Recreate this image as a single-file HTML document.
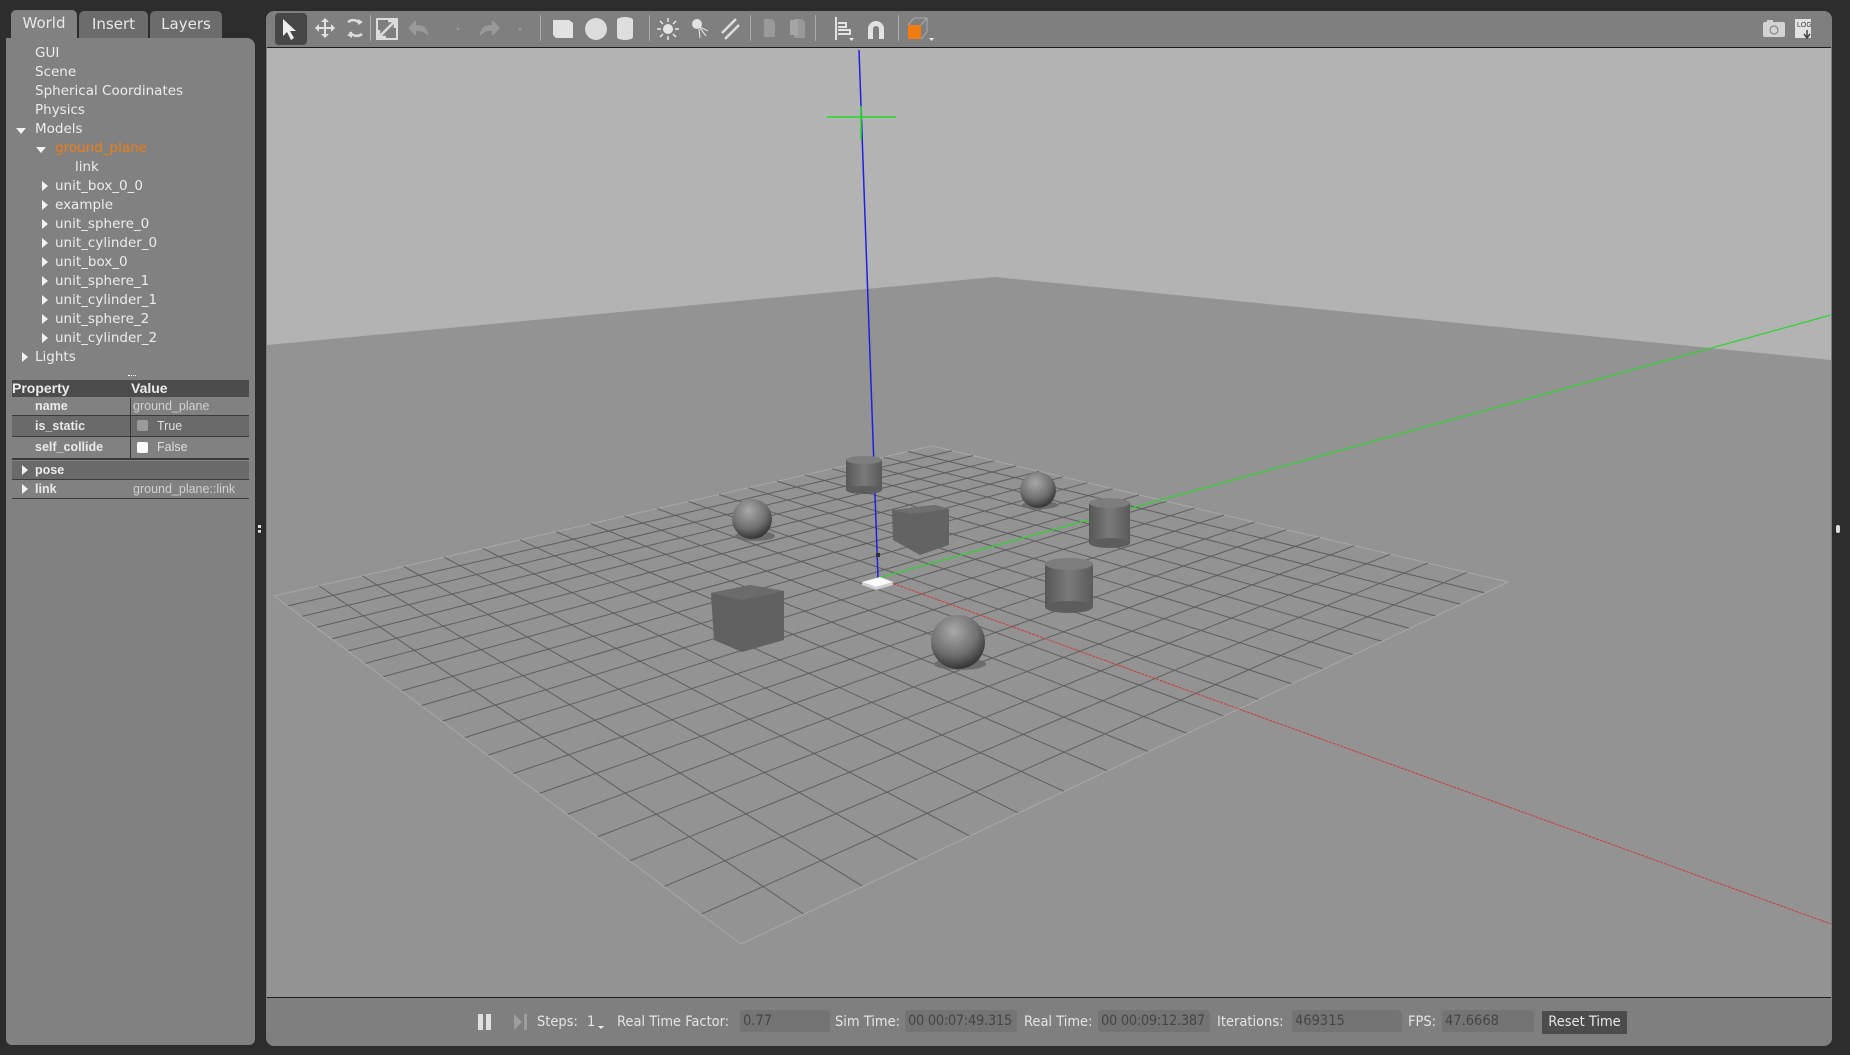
<!DOCTYPE html>
<html><head><meta charset="utf-8"><style>
html,body{margin:0;padding:0;width:1850px;height:1055px;overflow:hidden;background:#2d2d2d;font-family:"Liberation Sans","DejaVu Sans",sans-serif;}
.abs{position:absolute}
#panel{left:6px;top:38px;width:249px;height:1007px;background:#818181;border-radius:0 8px 6px 6px;}
.tab{top:11px;height:27px;border-radius:5px 5px 0 0;font-size:15px;color:#e8e8e8;text-align:center;line-height:26px;font-family:"DejaVu Sans",sans-serif;}
.tree{position:absolute;font-family:"DejaVu Sans",sans-serif;font-size:13.5px;color:#ececec;line-height:19px;}
.tri{position:absolute;width:0;height:0}
.tr{border-top:5px solid transparent;border-bottom:5px solid transparent;border-left:6px solid #f2f2f2}
.td{border-left:5px solid transparent;border-right:5px solid transparent;border-top:6px solid #f2f2f2}
.row{position:absolute;left:12px;width:237px;font-size:12.5px;font-weight:bold;color:#eaeaea;}
.bb{font-family:"DejaVu Sans Condensed","DejaVu Sans",sans-serif;font-size:14.5px;color:#e4e4e4;position:absolute;top:1014px}
.fld{position:absolute;top:1010px;height:22px;background:#747474;border-radius:3px;font-size:14.5px;color:#454545;line-height:22px;padding-left:3px;box-sizing:border-box;font-family:"DejaVu Sans Condensed","DejaVu Sans",sans-serif}
</style></head><body>
<div class="abs tab" style="left:11px;width:66px;background:#818181;top:10px;height:29px">World</div>
<div class="abs tab" style="left:79px;width:69px;background:#6c6c6c;">Insert</div>
<div class="abs tab" style="left:150px;width:72px;background:#6c6c6c;">Layers</div>
<div class="abs" id="panel"></div>
<div class="tree" style="left:35px;top:44px">GUI<br>Scene<br>Spherical Coordinates<br>Physics<br>Models</div>
<div class="tri td" style="left:16px;top:128px"></div>
<div class="tree" style="left:55px;top:139px;color:#f07d13">ground_plane</div>
<div class="tri td" style="left:36px;top:147px"></div>
<div class="tree" style="left:75px;top:158px">link</div>
<div class="tree" style="left:55px;top:177px">unit_box_0_0<br>example<br>unit_sphere_0<br>unit_cylinder_0<br>unit_box_0<br>unit_sphere_1<br>unit_cylinder_1<br>unit_sphere_2<br>unit_cylinder_2</div>
<div class="tri tr" style="left:42px;top:181px"></div><div class="tri tr" style="left:42px;top:200px"></div>
<div class="tri tr" style="left:42px;top:219px"></div><div class="tri tr" style="left:42px;top:238px"></div>
<div class="tri tr" style="left:42px;top:257px"></div><div class="tri tr" style="left:42px;top:276px"></div>
<div class="tri tr" style="left:42px;top:295px"></div><div class="tri tr" style="left:42px;top:314px"></div>
<div class="tri tr" style="left:42px;top:333px"></div>
<div class="tree" style="left:35px;top:348px">Lights</div>
<div class="tri tr" style="left:22px;top:352px"></div>
<div class="abs" style="left:128px;top:375px;width:8px;height:2px;border-top:1px dotted #fff"></div>
<div class="row" style="top:380px;height:17px;background:#4b4b4b;font-size:14px;line-height:17px"><span style="position:absolute;left:0">Property</span><span style="position:absolute;left:119px">Value</span></div>
<div class="row" style="top:398px;height:17px;line-height:17px;border-bottom:1px solid #3a3a3a"><span style="position:absolute;left:23px">name</span><span style="position:absolute;left:121px;font-weight:normal;color:#cfcfcf">ground_plane</span><span style="position:absolute;left:118px;top:0;height:18px;border-left:1px solid #3a3a3a"></span></div>
<div class="row" style="top:416px;height:20px;line-height:20px;background:#6a6a6a;border-bottom:1px solid #3a3a3a"><span style="position:absolute;left:23px">is_static</span><span style="position:absolute;left:118px;top:0;height:21px;border-left:1px solid #3a3a3a"></span><span style="position:absolute;left:125px;top:4px;width:11px;height:11px;background:#9a9a9a;border-radius:2px"></span><span style="position:absolute;left:145px;font-weight:normal;color:#dedede">True</span></div>
<div class="row" style="top:437px;height:21px;line-height:21px;border-bottom:2px solid #3a3a3a"><span style="position:absolute;left:23px">self_collide</span><span style="position:absolute;left:118px;top:0;height:21px;border-left:1px solid #3a3a3a"></span><span style="position:absolute;left:125px;top:5px;width:11px;height:11px;background:#fff;border-radius:2px"></span><span style="position:absolute;left:145px;font-weight:normal;color:#dedede">False</span></div>
<div class="row" style="top:461px;height:18px;line-height:18px;background:#6a6a6a;border-bottom:1px solid #3a3a3a"><span style="position:absolute;left:23px">pose</span></div>
<div class="tri tr" style="left:22px;top:465px"></div>
<div class="row" style="top:481px;height:17px;line-height:17px;border-bottom:1px solid #3a3a3a"><span style="position:absolute;left:23px">link</span><span style="position:absolute;left:121px;font-weight:normal;color:#cfcfcf">ground_plane::link</span></div>
<div class="tri tr" style="left:22px;top:484px"></div>
<div class="abs" style="left:258px;top:525px;width:3px;height:8px;border-left:3px dotted #ddd"></div>
<div class="abs" style="left:1836px;top:525px;width:4px;height:8px;border-left:4px dotted #ddd"></div>

<div class="abs" style="left:266px;top:11px;width:1566px;height:1035px;background:#7f7f7f;border-radius:8px;"></div>
<div class="abs" style="left:267px;top:47px;width:1564px;height:1px;background:#1e1e1e"></div>
<div class="abs" style="left:267px;top:997px;width:1564px;height:1px;background:#1e1e1e"></div>

<svg class="abs" style="left:0;top:0" width="1850" height="1055" id="sv">
<defs><clipPath id="vc"><rect x="267" y="48" width="1564" height="949"/></clipPath>
<radialGradient id="sg" cx="0.42" cy="0.3" r="0.75"><stop offset="0" stop-color="#a8a8a8"/><stop offset="0.6" stop-color="#6e6e6e"/><stop offset="1" stop-color="#2a2a2a"/></radialGradient>
<linearGradient id="cg" x1="0" x2="1"><stop offset="0" stop-color="#575757"/><stop offset="0.5" stop-color="#7a7a7a"/><stop offset="1" stop-color="#5a5a5a"/></linearGradient>
</defs>
<g clip-path="url(#vc)">
<rect x="267" y="48" width="1564" height="949" fill="#939393"/>
<polygon points="267,48 1831,48 1831,360 995,277 267,345" fill="#b3b3b3"/>
<g id="grid" stroke="#5e5e5e" stroke-width="1" fill="none"></g>
<line x1="878" y1="578" x2="1831" y2="315" stroke="#2dd42d" stroke-width="1.2"/>
<line x1="878" y1="578" x2="1831" y2="924" stroke="#d03a3a" stroke-width="1" stroke-dasharray="3,1"/>
<line x1="859" y1="50" x2="878" y2="578" stroke="#2020e0" stroke-width="1.5"/>
<line x1="827" y1="117" x2="896" y2="117" stroke="#22dd22" stroke-width="1.5"/>
<line x1="861" y1="106" x2="861" y2="140" stroke="#22dd22" stroke-width="1.5"/>
<g>
<rect x="846" y="460" width="36" height="30" fill="url(#cg)"/><ellipse cx="864" cy="490" rx="18" ry="4" fill="#5d5d5d"/><ellipse cx="864" cy="460" rx="18" ry="4" fill="#7d7d7d"/>
<rect x="1089" y="503" width="41" height="40" fill="url(#cg)"/><ellipse cx="1109.5" cy="543" rx="20.5" ry="5" fill="#5d5d5d"/><ellipse cx="1109.5" cy="503" rx="20.5" ry="5" fill="#7d7d7d"/>
<rect x="1045" y="564" width="48" height="43" fill="url(#cg)"/><ellipse cx="1069" cy="607" rx="24" ry="6" fill="#5d5d5d"/><ellipse cx="1069" cy="564" rx="24" ry="6" fill="#7d7d7d"/>
</g>
<polygon points="892,510 935,505 949,509 949,545 920,555 893,540" fill="#636363"/>
<polygon points="892,510 935,505 949,509 912,514" fill="#6f6f6f"/>
<polygon points="711,593 750,585 784,591 784,640 742,652 714,640" fill="#616161"/>
<polygon points="711,593 750,585 784,591 742,600" fill="#6b6b6b"/>
<ellipse cx="755" cy="536" rx="20" ry="5" fill="#6c6c6c"/>
<circle cx="752" cy="519" r="20" fill="url(#sg)"/>
<ellipse cx="1040" cy="505" rx="18" ry="4" fill="#6c6c6c"/>
<circle cx="1038" cy="490" r="18" fill="url(#sg)"/>
<ellipse cx="960" cy="664" rx="26" ry="6" fill="#6c6c6c"/>
<circle cx="958" cy="642" r="27" fill="url(#sg)"/>
<polygon points="862,582 880,577 893,582 876,587" fill="#fafafa"/>
<polygon points="862,582 876,587 893,582 893,585 876,590 862,585" fill="#cfcfcf"/>
<rect x="876" y="553" width="4" height="4" fill="#333"/>
</g>
<g>
<rect x="275" y="13" width="32" height="32" rx="4" fill="#474747"/>
<path d="M283 19 L283 36 L287 32 L291 40 L294 38 L290 31 L296 31 Z" fill="#eee"/>
<g fill="#e0e0e0"><path d="M325 18 l4 4 h-3 v5 h5 v-3 l4 4 -4 4 v-3 h-5 v5 h3 l-4 4 -4 -4 h3 v-5 h-5 v3 l-4 -4 4 -4 v3 h5 v-5 h-3 z"/></g>
<path d="M348 22 a8 8 0 0 1 12 2 M362 34 a8 8 0 0 1 -12 -2" stroke="#dcdcdc" stroke-width="2.5" fill="none"/>
<path d="M358 19 l5 3 -5 3z M352 38 l-5 -3 5 -3z" fill="#dcdcdc"/>
<rect x="377" y="19" width="20" height="20" fill="none" stroke="#dcdcdc" stroke-width="2"/>
<path d="M379 37 L395 21 M388 21 h7 v7 M379 30 v7 h7" stroke="#dcdcdc" stroke-width="2.5" fill="none"/>
<rect x="370" y="15" width="1" height="26" fill="#aaa"/>
<path d="M428 36 c0 -8 -4 -11 -12 -11 v-5 l-8 8 8 8 v-5 c5 0 9 1 12 5z" fill="#999"/>
<path d="M456 28 l4 0 -2 3z" fill="#999"/>
<path d="M480 36 c0 -8 4 -11 12 -11 v-5 l8 8 -8 8 v-5 c-5 0 -9 1 -12 5z" fill="#999"/>
<path d="M518 28 l4 0 -2 3z" fill="#999"/>
<rect x="540" y="15" width="1" height="26" fill="#aaa"/>
<path d="M553 20 h16 l4 3 v15 h-17 l-3 -3z" fill="#e2e2e2"/>
<ellipse cx="596" cy="29" rx="11" ry="11" fill="#dcdcdc"/>
<path d="M617 20 a8 3 0 0 1 16 0 v17 a8 3 0 0 1 -16 0z" fill="#dedede"/>
<rect x="649" y="15" width="1" height="26" fill="#aaa"/>
<circle cx="668" cy="29" r="5" fill="#e6e6e6"/>
<path d="M668 18v4M668 36v4M657 29h4M675 29h4M660 21l3 3M673 34l3 3M676 21l-3 3M660 37l3 -3" stroke="#e6e6e6" stroke-width="1.5"/>
<circle cx="697" cy="24" r="5" fill="#e2e2e2"/>
<path d="M700 27 l8 4 M700 28 l6 8 M699 29 l1 9" stroke="#ddd" stroke-width="1.2"/>
<path d="M722 33 l14 -14 M725 39 l14 -14" stroke="#dedede" stroke-width="2.5"/>
<rect x="750" y="15" width="1" height="26" fill="#aaa"/>
<path d="M764 19 h8 l3 3 v15 h-11z" fill="#999"/><path d="M794 19 h8 l3 3 v16 h-11z" fill="#999"/><rect x="790" y="20" width="8" height="15" fill="#a5a5a5"/>
<rect x="815" y="15" width="1" height="26" fill="#aaa"/>
<path d="M836 17 v23 M838 23 h8 v4 h-8 M838 30 h12 v4 h-12" stroke="#e3e3e3" stroke-width="2" fill="none"/>
<path d="M849 38 h5 l-2.5 3z" fill="#eee"/>
<path d="M868 39 v-10 a8 8 0 0 1 16 0 v10 h-5 v-10 a3 3 0 0 0 -6 0 v10z" fill="#e2e2e2"/>
<rect x="898" y="15" width="1" height="26" fill="#aaa"/>
<rect x="908" y="25" width="13" height="14" fill="#f07c12"/>
<path d="M908 25 l6 -7 h13 v14 l-6 7 M921 25 l6 -7" stroke="#aaa" fill="none"/>
<path d="M929 38 h5 l-2.5 3z" fill="#eee"/>
<rect x="1763" y="22" width="22" height="15" rx="2" fill="#d3d3d3"/><rect x="1767" y="20" width="6" height="3" fill="#d3d3d3"/><circle cx="1774" cy="30" r="4" fill="none" stroke="#888" stroke-width="1.2"/>
<path d="M1795 19 h16 v19 h-16z" fill="#e2e2e2"/><text x="1797" y="27" font-size="7" fill="#444" font-family="Liberation Sans">LOG</text><path d="M1807 30 v7 M1804 34 l3 4 3 -4" stroke="#444" stroke-width="1.5" fill="none"/>
<rect x="478" y="1014" width="5" height="16" fill="#e0e0e0"/><rect x="486" y="1014" width="5" height="16" fill="#e0e0e0"/>
<path d="M514 1014 l8 8 -8 8z" fill="#9e9e9e"/><rect x="524" y="1014" width="3" height="16" fill="#9e9e9e"/>
<path d="M598 1026 h6 l-3 3z" fill="#eee"/>
</g>
</svg>
<div class="bb" style="left:537px">Steps:</div>
<div class="bb" style="left:587px">1</div>
<div class="bb" style="left:617px">Real Time Factor:</div>
<div class="fld" style="left:740px;width:90px">0.77</div>
<div class="bb" style="left:835px">Sim Time:</div>
<div class="fld" style="left:905px;width:112px;letter-spacing:-0.3px">00 00:07:49.315</div>
<div class="bb" style="left:1024px">Real Time:</div>
<div class="fld" style="left:1098px;width:112px;letter-spacing:-0.3px">00 00:09:12.387</div>
<div class="bb" style="left:1217px">Iterations:</div>
<div class="fld" style="left:1292px;width:110px">469315</div>
<div class="bb" style="left:1408px">FPS:</div>
<div class="fld" style="left:1442px;width:92px">47.6668</div>
<div class="abs" style="left:1542px;top:1011px;width:85px;height:23px;background:#4c4c4c;color:#e6e6e6;font-size:14.5px;line-height:23px;text-align:center;font-family:'DejaVu Sans Condensed','DejaVu Sans',sans-serif">Reset Time</div>
<script>
(function(){
var P=[[932,446],[1508,582],[741,944],[274,596]];
function H(u,v){
 var x0=P[0][0],y0=P[0][1],x1=P[1][0],y1=P[1][1],x2=P[2][0],y2=P[2][1],x3=P[3][0],y3=P[3][1];
 var dx1=x1-x2,dx2=x3-x2,dy1=y1-y2,dy2=y3-y2,sx=x0-x1+x2-x3,sy=y0-y1+y2-y3;
 var den=dx1*dy2-dx2*dy1;
 var g=(sx*dy2-dx2*sy)/den,h=(dx1*sy-sx*dy1)/den;
 var a=x1-x0+g*x1,b=x3-x0+h*x3,c=x0,d=y1-y0+g*y1,e=y3-y0+h*y3,f=y0;
 var w=g*u+h*v+1;return [(a*u+b*v+c)/w,(d*u+e*v+f)/w];
}
var s='',N=20;
for(var i=0;i<=N;i++){var t=i/N;var A=H(t,0),B=H(t,1),C=H(0,t),D=H(1,t);
 var col=(i==0||i==N)?' stroke="#a8a8a8"':'';
 s+='<line x1="'+A[0]+'" y1="'+A[1]+'" x2="'+B[0]+'" y2="'+B[1]+'"'+col+'/>';
 s+='<line x1="'+C[0]+'" y1="'+C[1]+'" x2="'+D[0]+'" y2="'+D[1]+'"'+col+'/>';}
document.getElementById('grid').innerHTML=s;
})();
</script>
</body></html>
